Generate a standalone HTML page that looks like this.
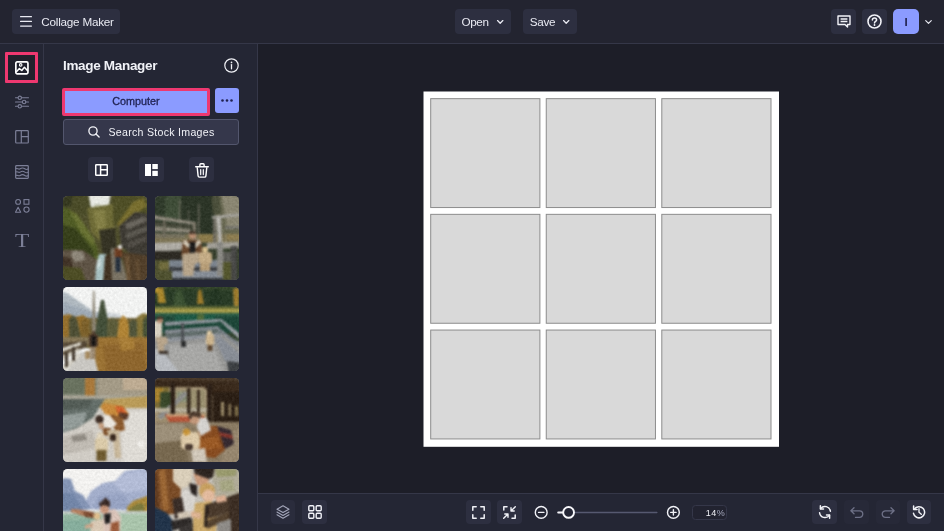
<!DOCTYPE html>
<html lang="en">
<head>
<meta charset="utf-8">
<title>Collage Maker</title>
<style>
*{box-sizing:border-box;margin:0;padding:0}
html,body{width:944px;height:531px;overflow:hidden;background:#1d1e28;font-family:"Liberation Sans",sans-serif;color:#e9eaf2}
.abs{position:absolute}
#app{position:relative;width:944px;height:531px;overflow:hidden;background:#1d1e28;will-change:transform}
#topbar{left:0;top:0;width:944px;height:44px;background:#232430;border-bottom:1px solid #353748}
#rail{left:0;top:44px;width:44px;height:487px;background:#242634;border-right:1px solid #353748}
#panel{left:44px;top:44px;width:214px;height:487px;background:#242634;border-right:1px solid #353748}
#bottombar{left:258px;top:493px;width:686px;height:38px;background:#242634;border-top:1px solid #353748}
.tbtn{position:absolute;top:9px;height:25px;background:#2d2f40;border-radius:4px;font-size:11.7px;line-height:25.6px;color:#e9eaf2;white-space:nowrap}
.bbtn{position:absolute;top:5.6px;width:24.5px;height:24.8px;background:#2d2f40;border-radius:4px}
svg{position:absolute;overflow:visible}
.photo{position:absolute;width:83.8px;height:83.6px;border-radius:4.5px;overflow:hidden}
.cell{position:absolute;width:110.3px;height:110.3px;background:#d9d9d9;border:1px solid #8e8e8e}
.pb{width:25px;height:25px;background:#2d2f40;border-radius:4px}
.bbtn.dis{background:#272938}
.sx{display:inline-block;transform-origin:0 50%}
.sx.c{transform-origin:50% 50%}
</style>
</head>
<body>
<div id="app">

<!-- TOP BAR -->
<div id="topbar" class="abs">
  <div class="tbtn" style="left:12px;width:108px">
    <svg width="12" height="11" viewBox="0 0 12 11" style="left:8px;top:7.2px"><path d="M0.6 0.7H11.4M0.6 5.4H11.4M0.6 10.1H11.4" stroke="#e9eaf2" stroke-width="1.3" fill="none" stroke-linecap="round"/></svg>
    <span class="abs" id="t_cm" style="left:29.3px;top:0;letter-spacing:-0.22px">Collage Maker</span>
  </div>
  <div class="tbtn" style="left:455px;width:56px">
    <span class="abs" id="t_open" style="left:6.5px;top:0;letter-spacing:-0.38px">Open</span>
    <svg width="6.4" height="4" viewBox="0 0 8 5" style="left:41.7px;top:10.9px"><path d="M0.7 0.7L4 4L7.3 0.7" stroke="#e9eaf2" stroke-width="1.6" fill="none" stroke-linecap="round" stroke-linejoin="round"/></svg>
  </div>
  <div class="tbtn" style="left:523px;width:54px">
    <span class="abs" id="t_save" style="left:6.8px;top:0;letter-spacing:-0.33px">Save</span>
    <svg width="6.4" height="4" viewBox="0 0 8 5" style="left:39.8px;top:10.9px"><path d="M0.7 0.7L4 4L7.3 0.7" stroke="#e9eaf2" stroke-width="1.6" fill="none" stroke-linecap="round" stroke-linejoin="round"/></svg>
  </div>
  <div class="tbtn" style="left:831px;width:25px">
    <svg width="14" height="13" viewBox="0 0 14 13" style="left:6px;top:6px"><path d="M1 1H13V9.5H10.5V12L8 9.5H1Z" stroke="#f2f3f8" stroke-width="1.4" fill="none" stroke-linejoin="round"/><path d="M3.6 4H10.4M3.6 6.5H10.4" stroke="#f2f3f8" stroke-width="1.3" fill="none"/></svg>
  </div>
  <div class="tbtn" style="left:862px;width:25px">
    <svg width="15" height="15" viewBox="0 0 15 15" style="left:5px;top:5px"><circle cx="7.5" cy="7.5" r="6.5" stroke="#f2f3f8" stroke-width="1.6" fill="none"/><path d="M5.4 6.1C5.4 4.8 6.3 4 7.5 4C8.7 4 9.6 4.8 9.6 5.9C9.6 7.3 7.5 7.4 7.5 9" stroke="#f2f3f8" stroke-width="1.5" fill="none" stroke-linecap="round"/><circle cx="7.5" cy="11" r="0.9" fill="#f2f3f8"/></svg>
  </div>
  <div class="abs" style="left:893px;top:9px;width:26px;height:25px;background:#8b9bff;border-radius:5px;color:#1d1e4a;font-size:11.5px;font-weight:bold;line-height:26px;text-align:center">I</div>
  <svg width="7" height="4.2" viewBox="0 0 8 5" style="left:924.9px;top:19.5px"><path d="M0.7 0.7L4 4L7.3 0.7" stroke="#e9eaf2" stroke-width="1.4" fill="none" stroke-linecap="round" stroke-linejoin="round"/></svg>
</div>

<!-- LEFT RAIL -->
<div id="rail" class="abs">
  <div class="abs" style="left:5.2px;top:8px;width:33px;height:30.6px;border:3px solid #ee3870;border-radius:1px;background:#20212c"></div>
  <!-- image manager icon -->
  <svg width="14" height="14" viewBox="0 0 14 14" style="left:14.7px;top:16.6px"><rect x="0.85" y="0.85" width="12.1" height="12" rx="1.3" stroke="#fff" stroke-width="1.7" fill="none"/><circle cx="5.7" cy="3.9" r="1.25" stroke="#fff" stroke-width="1.1" fill="none"/><path d="M1.2 10.9L4.4 7.6L6.8 9.5L9.4 6.3L12.8 10" stroke="#fff" stroke-width="1.5" fill="none" stroke-linejoin="round"/></svg>
  <!-- sliders -->
  <svg width="14" height="14" viewBox="0 0 14 14" style="left:15px;top:51px"><path d="M0.5 2.8H13.5M0.5 7H13.5M0.5 11.3H13.5" stroke="#7c7f97" stroke-width="1.1" fill="none" stroke-linecap="round"/><circle cx="4.8" cy="2.8" r="1.7" fill="#242635" stroke="#7c7f97" stroke-width="1.1"/><circle cx="9.1" cy="7" r="1.7" fill="#242635" stroke="#7c7f97" stroke-width="1.1"/><circle cx="4.8" cy="11.3" r="1.7" fill="#242635" stroke="#7c7f97" stroke-width="1.1"/></svg>
  <!-- layout -->
  <svg width="14" height="14" viewBox="0 0 14 14" style="left:15px;top:86px"><rect x="0.7" y="0.7" width="12.6" height="12.3" rx="0.8" stroke="#7c7f97" stroke-width="1.2" fill="none"/><path d="M6.3 0.7V13M6.3 6.6H13.3" stroke="#7c7f97" stroke-width="1.2" fill="none"/></svg>
  <!-- waves -->
  <svg width="14" height="14" viewBox="0 0 14 14" style="left:15px;top:121px"><rect x="0.7" y="0.7" width="12.6" height="12.6" rx="0.8" stroke="#7c7f97" stroke-width="1.2" fill="none"/><path d="M0.7 3.8C2.3 2.6 3.5 5 5.2 3.8S8.2 2.6 9.8 3.8S12.2 4.6 13.3 3.8M0.7 7.1C2.3 5.9 3.5 8.3 5.2 7.1S8.2 5.9 9.8 7.1S12.2 7.9 13.3 7.1M0.7 10.5C2.3 9.3 3.5 11.7 5.2 10.5S8.2 9.3 9.8 10.5S12.2 11.3 13.3 10.5" stroke="#7c7f97" stroke-width="1.1" fill="none"/></svg>
  <!-- shapes -->
  <svg width="15" height="14" viewBox="0 0 15 14" style="left:14.5px;top:155px"><circle cx="3.1" cy="2.9" r="2.4" stroke="#7c7f97" stroke-width="1.1" fill="none"/><rect x="9" y="0.6" width="4.9" height="4.6" stroke="#7c7f97" stroke-width="1.1" fill="none"/><path d="M3.1 8.3L5.7 13.2H0.5Z" stroke="#7c7f97" stroke-width="1.1" fill="none" stroke-linejoin="round"/><circle cx="11.5" cy="10.6" r="2.6" stroke="#7c7f97" stroke-width="1.1" fill="none"/></svg>
  <!-- text -->
  <div class="abs" style="left:11.8px;top:185.2px;width:20px;height:24px;font-family:'Liberation Serif',serif;font-size:19.4px;line-height:24px;text-align:center;color:#7c7f97;transform:scaleX(1.2)">T</div>
</div>

<!-- PANEL -->
<div id="panel" class="abs">
  <div class="abs" style="left:19px;top:13px;font-size:13.5px;font-weight:bold;line-height:18px;letter-spacing:-0.32px;color:#f1f2f7;white-space:nowrap"><span id="t_im" class="sx">Image Manager</span></div>
  <svg width="15" height="15" viewBox="0 0 15 15" style="left:179.5px;top:14.2px"><circle cx="7.5" cy="7.5" r="6.7" stroke="#f1f2f7" stroke-width="1.2" fill="none"/><path d="M7.5 6.6V10.8" stroke="#f1f2f7" stroke-width="1.3" fill="none" stroke-linecap="round"/><circle cx="7.5" cy="4.4" r="0.85" fill="#f1f2f7"/></svg>
  <!-- computer -->
  <div class="abs" style="left:17.8px;top:43.8px;width:148.2px;height:28px;background:#8b9bff;border:3px solid #ee3870;border-radius:2px;color:#1f2150;font-size:10.8px;line-height:21.4px;letter-spacing:0;-webkit-text-stroke:0.3px #1f2150;text-align:center;white-space:nowrap"><span id="t_comp" class="sx c">Computer</span></div>
  <div class="abs" style="left:171px;top:44px;width:24.3px;height:25.2px;background:#8b9bff;border-radius:3px">
    <svg width="12" height="3" viewBox="0 0 12 3" style="left:6.1px;top:11.2px"><circle cx="1.5" cy="1.5" r="1.3" fill="#1f2150"/><circle cx="6" cy="1.5" r="1.3" fill="#1f2150"/><circle cx="10.5" cy="1.5" r="1.3" fill="#1f2150"/></svg>
  </div>
  <!-- search -->
  <div class="abs" style="left:19px;top:75.2px;width:176px;height:25.5px;background:#35374b;border:1px solid #53566d;border-radius:3px">
    <svg width="13" height="13" viewBox="0 0 13 13" style="left:23.9px;top:6.2px"><circle cx="5" cy="5" r="4.1" stroke="#f1f2f7" stroke-width="1.35" fill="none"/><path d="M8 8L11.1 11" stroke="#f1f2f7" stroke-width="1.4" stroke-linecap="round"/></svg>
    <span class="abs" style="left:44.5px;top:0;font-size:10.6px;line-height:25.6px;letter-spacing:0.28px;color:#f1f2f7;white-space:nowrap"><span id="t_search" class="sx">Search Stock Images</span></span>
  </div>
  <!-- 3 buttons -->
  <div class="abs pb" style="left:44px;top:113px">
    <svg width="13" height="12" viewBox="0 0 13 12" style="left:6.5px;top:6.7px"><rect x="0.75" y="0.75" width="11.5" height="10.5" rx="0.6" stroke="#fff" stroke-width="1.5" fill="none"/><path d="M5.6 0.75V11.25M5.6 5.8H12.25" stroke="#fff" stroke-width="1.5" fill="none"/></svg>
  </div>
  <div class="abs pb" style="left:94.5px;top:113px">
    <svg width="13" height="12" viewBox="0 0 13 12" style="left:6.3px;top:6.7px"><rect x="0" y="0" width="6" height="12" fill="#fff"/><rect x="7.3" y="0" width="5.5" height="5.1" fill="#fff"/><rect x="7.3" y="6.8" width="5.5" height="5.2" fill="#fff"/></svg>
  </div>
  <div class="abs pb" style="left:145px;top:113px">
    <svg width="14" height="15" viewBox="0 0 14 15" style="left:6.2px;top:5.5px"><path d="M0.7 3.7H13.3M4.9 3.5V1.7Q4.9 0.8 5.8 0.8H8.2Q9.1 0.8 9.1 1.7V3.5" stroke="#fff" stroke-width="1.4" fill="none" stroke-linecap="round"/><path d="M2.2 4.3L3.1 12.9Q3.2 14.1 4.4 14.1H9.6Q10.8 14.1 10.9 12.9L11.8 4.3" stroke="#fff" stroke-width="1.4" fill="none" stroke-linejoin="round"/><path d="M5.7 6.7V11.6M8.3 6.7V11.6" stroke="#fff" stroke-width="1.2" fill="none" stroke-linecap="round"/></svg>
  </div>
  <!-- photos -->
  <div class="photo" id="p1" style="left:19.4px;top:152px"><svg width="84" height="84" viewBox="0 0 84 84" style="left:0;top:0"><defs><filter id="f1" x="0" y="0" width="84" height="84" filterUnits="userSpaceOnUse" color-interpolation-filters="sRGB"><feGaussianBlur stdDeviation="0.8" result="b"/><feTurbulence type="fractalNoise" baseFrequency="0.4" numOctaves="3" seed="8" result="n"/><feColorMatrix in="n" type="matrix" values="0.5 0.5 0 0 0 0.5 0.5 0 0 0 0.5 0.5 0 0 0 0 0 0 0 1" result="g"/><feComposite in="b" in2="g" operator="arithmetic" k1="0" k2="1" k3="0.15" k4="-0.075"/></filter></defs><rect x="0" y="0" width="84" height="84" fill="#777"/><g filter="url(#f1)">
<rect x="-4" y="-4" width="92" height="92" fill="#51502e"/>
<polygon points="-4,-4 28,-4 30,16 14,22 -4,12" fill="#4b4c29"/>
<polygon points="-4,-4 10,-4 8,10 -4,12" fill="#373a21"/>
<polygon points="25,-4 48,-4 46,9 40,13 34,11 28,12" fill="#e6e8e1"/>
<polygon points="31,8 38,8 37,20 32,18" fill="#c9ccba"/>
<polygon points="24,12 50,8 52,40 38,46 28,36" fill="#6e6b37"/>
<polygon points="30,14 42,14 43,34 34,36" fill="#837f46"/>
<polygon points="-4,10 6,13 20,28 34,50 36,64 20,58 -4,56" fill="#515d26"/>
<polygon points="6,14 14,18 32,44 30,50 18,36" fill="#687133"/>
<polygon points="-4,28 12,32 30,54 32,64 -4,58" fill="#37401b"/>
<polygon points="50,-4 88,-4 88,20 72,14 58,30 50,28" fill="#4f4f27"/>
<polygon points="54,28 70,6 80,2 84,10 70,20 58,38" fill="#796f30"/>
<polygon points="56,30 72,16 88,18 88,66 70,60 58,50" fill="#3e3b34"/>
<polygon points="62,28 82,20 84,25 64,34" fill="#69655d"/>
<polygon points="62,38 84,30 84,35 64,43" fill="#5c5951"/>
<polygon points="64,47 84,40 84,44 66,52" fill="#534f48"/>
<polygon points="36,34 52,32 54,56 40,60" fill="#353324"/>
<polygon points="-4,54 20,54 34,64 36,88 -4,88" fill="#5f5446"/>
<polygon points="10,54 20,56 22,64 12,66 8,60" fill="#8d8679"/>
<polygon points="-4,60 8,62 10,72 -4,72" fill="#413327"/>
<polygon points="-4,70 18,72 24,88 -4,88" fill="#4d4d25"/>
<polygon points="36,58 43,58 42,70 40,88 32,88 33,70" fill="#a6bfc0"/>
<polygon points="34,64 38,62 38,70 34,74" fill="#c9d8d8"/>
<polygon points="48,52 55,52 66,88 46,88" fill="#797263"/>
<polygon points="42,60 48,58 49,88 40,88" fill="#413323"/>
<polygon points="58,56 88,60 88,88 66,88" fill="#513f2a"/>
<polygon points="62,60 66,60 68,88 64,88" fill="#6b5438"/>
<polygon points="72,64 76,64 78,88 74,88" fill="#614c33"/>
<rect x="51.5" y="52" width="7.5" height="10" rx="2" fill="#6d3e23"/>
<rect x="52.5" y="61" width="5" height="15" fill="#26303e"/>
<circle cx="57" cy="51" r="2.2" fill="#e2e0dc"/>
</g></svg></div>
  <div class="photo" id="p2" style="left:111px;top:152px"><svg width="84" height="84" viewBox="0 0 84 84" style="left:0;top:0"><defs><filter id="f2" x="0" y="0" width="84" height="84" filterUnits="userSpaceOnUse" color-interpolation-filters="sRGB"><feGaussianBlur stdDeviation="0.8" result="b"/><feTurbulence type="fractalNoise" baseFrequency="0.4" numOctaves="3" seed="15" result="n"/><feColorMatrix in="n" type="matrix" values="0.5 0.5 0 0 0 0.5 0.5 0 0 0 0.5 0.5 0 0 0 0 0 0 0 1" result="g"/><feComposite in="b" in2="g" operator="arithmetic" k1="0" k2="1" k3="0.15" k4="-0.075"/></filter></defs><rect x="0" y="0" width="84" height="84" fill="#777"/><g filter="url(#f2)">
<rect x="-4" y="-4" width="92" height="92" fill="#343d2b"/>
<rect x="-4" y="-4" width="30" height="44" fill="#303b2b"/>
<rect x="10" y="-4" width="16" height="26" fill="#3f4d38"/>
<rect x="26" y="-4" width="34" height="44" fill="#2c3527"/>
<rect x="24" y="4" width="1.500" height="34" fill="#6a6a5c"/>
<rect x="43" y="8" width="1.500" height="30" fill="#66665a"/>
<rect x="33" y="14" width="1.200" height="24" fill="#5c5c50"/>
<polygon points="58,-4 88,-4 88,40 62,40" fill="#66664f"/>
<polygon points="66,-2 84,0 86,30 72,30" fill="#8a8672"/>
<polygon points="56,2 64,-2 66,18 58,18" fill="#4a4e3a"/>
<rect x="-4" y="38" width="92" height="9" fill="#7d7455"/>
<rect x="44" y="38" width="16" height="8" fill="#8a7a4a"/>
<polygon points="-2,19 40,26 40,29 -2,23" fill="#8d887b"/>
<polygon points="-2,26 38,30 38,32 -2,29" fill="#4a4a3c"/>
<polygon points="-2,30 36,33 36,37 -2,35" fill="#8a8577"/>
<polygon points="-2,37 30,38 30,42 -2,42" fill="#77725f"/>
<rect x="38" y="26" width="3" height="18" fill="#807a6c"/>
<rect x="8" y="24" width="2.500" height="18" fill="#6e6a5c"/>
<polygon points="57,20 88,17 88,20 57,23" fill="#a3a19a"/>
<rect x="58" y="22" width="3" height="26" fill="#6d6a60"/>
<polygon points="61,22 66,22 67,46 63,46" fill="#b3b1ab"/>
<rect x="70" y="30" width="16" height="3" fill="#77766e"/>
<rect x="72" y="38" width="14" height="6" fill="#8c7c50"/>
<polygon points="-4,47 30,46 30,54 -4,56" fill="#adaaa3"/>
<polygon points="52,47 84,46 84,52 52,53" fill="#a19e96"/>
<rect x="-4" y="55" width="36" height="9" fill="#2d2a23"/>
<rect x="-4" y="64" width="24" height="24" fill="#4f5130"/>
<rect x="4" y="66" width="10" height="8" fill="#6f6a3c"/>
<rect x="14" y="64" width="58" height="7" fill="#7b838d"/>
<rect x="14" y="71" width="58" height="4" fill="#3e4044"/>
<rect x="17" y="75" width="58" height="8" fill="#868d96"/>
<rect x="17" y="82" width="60" height="6" fill="#2f3236"/>
<rect x="62" y="46" width="6" height="34" fill="#8a8984"/>
<rect x="76" y="50" width="6" height="38" fill="#484846"/>
<rect x="68" y="56" width="8" height="10" fill="#5f5f5a"/>
<rect x="68" y="66" width="8" height="18" fill="#54562e"/>
<polygon points="28,44 46,44 48,60 26,60" fill="#69482e"/>
<polygon points="30,43 36,50 33,52 28,47" fill="#d3cab8"/>
<polygon points="44,43 38,50 41,52 46,47" fill="#d3cab8"/>
<rect x="34.500" y="46" width="6" height="12" fill="#1d1c1c"/>
<circle cx="37.500" cy="39.500" r="3.600" fill="#b48a6e"/>
<rect x="34" y="35" width="7" height="3" rx="1.500" fill="#4a3a2e"/>
<polygon points="27,58 44,56 45,66 40,68 38,80 28,80" fill="#b5a389"/>
<rect x="44" y="56" width="13" height="12" rx="3" fill="#c2aa84"/>
<circle cx="50" cy="53.500" r="3" fill="#d8c090"/>
<rect x="45" y="67" width="10" height="8" fill="#b59c76"/>
</g></svg></div>
  <div class="photo" id="p3" style="left:19.4px;top:243.1px"><svg width="84" height="84" viewBox="0 0 84 84" style="left:0;top:0"><defs><filter id="f3" x="0" y="0" width="84" height="84" filterUnits="userSpaceOnUse" color-interpolation-filters="sRGB"><feGaussianBlur stdDeviation="0.8" result="b"/><feTurbulence type="fractalNoise" baseFrequency="0.4" numOctaves="3" seed="22" result="n"/><feColorMatrix in="n" type="matrix" values="0.5 0.5 0 0 0 0.5 0.5 0 0 0 0.5 0.5 0 0 0 0 0 0 0 1" result="g"/><feComposite in="b" in2="g" operator="arithmetic" k1="0" k2="1" k3="0.15" k4="-0.075"/></filter></defs><rect x="0" y="0" width="84" height="84" fill="#777"/><g filter="url(#f3)">
<rect x="-4" y="-4" width="92" height="92" fill="#f1f2f1"/>
<polygon points="-4,4 4,6 30,24 62,32 -4,34" fill="#b0b9c0"/>
<polygon points="-4,14 20,22 40,32 -4,34" fill="#9ea9b4"/>
<polygon points="40,25 56,27 66,34 40,34" fill="#cdd2d6"/>
<rect x="-4" y="31" width="92" height="30" fill="#6e6036"/>
<polygon points="-4,29 6,27 12,30 20,28 26,32 26,52 -4,52" fill="#95702e"/>
<polygon points="6,32 10,28 14,32 18,50 6,50" fill="#4f5036"/>
<polygon points="18,34 24,30 28,50 18,50" fill="#7b602b"/>
<polygon points="38,13 41,13 48,50 31,50" fill="#434f39"/>
<polygon points="30,4 31.500,4 33,44 29,44" fill="#8d8676"/>
<polygon points="44,36 50,30 56,36 58,50 44,50" fill="#5c5c3a"/>
<polygon points="56,34 60,28 64,32 69,50 54,50" fill="#b08436"/>
<polygon points="66,36 70,32 76,36 78,50 66,50" fill="#50543a"/>
<polygon points="74,30 80,26 88,28 88,52 74,52" fill="#857438"/>
<polygon points="80,34 84,28 88,34 88,50 80,50" fill="#465036"/>
<rect x="-4" y="50" width="30" height="8" fill="#857656"/>
<polygon points="26,50 88,50 88,88 30,88" fill="#9a7234"/>
<polygon points="40,58 80,56 84,88 44,88" fill="#8e662e"/>
<polygon points="56,50 70,50 72,62 58,64" fill="#a87e38"/>
<polygon points="-4,56 24,54 24,60 -4,70" fill="#544735"/>
<polygon points="14,66 30,64 36,88 2,88" fill="#c9c7c2"/>
<polygon points="-4,62 18,55 18,58 -4,66" fill="#dcd8cc"/>
<polygon points="-4,70 16,61 17,64 -4,75" fill="#d6d2c6"/>
<polygon points="-4,82 16,66 18,68 -2,88" fill="#d9d5ca"/>
<rect x="9" y="60" width="3" height="14" fill="#3d3328"/>
<rect x="2" y="66" width="3" height="14" fill="#3d3328"/>
<rect x="26" y="47" width="9" height="13" rx="2" fill="#4a3628"/>
<rect x="28.500" y="49" width="4" height="10" fill="#191818"/>
<circle cx="30.500" cy="45.500" r="1.800" fill="#5a4638"/>
<rect x="27.500" y="60" width="5" height="12" fill="#9a8870"/>
<rect x="22" y="64" width="5" height="8" rx="1.500" fill="#a58a60"/>
</g></svg></div>
  <div class="photo" id="p4" style="left:111px;top:243.1px"><svg width="84" height="84" viewBox="0 0 84 84" style="left:0;top:0"><defs><filter id="f4" x="0" y="0" width="84" height="84" filterUnits="userSpaceOnUse" color-interpolation-filters="sRGB"><feGaussianBlur stdDeviation="0.8" result="b"/><feTurbulence type="fractalNoise" baseFrequency="0.4" numOctaves="3" seed="29" result="n"/><feColorMatrix in="n" type="matrix" values="0.5 0.5 0 0 0 0.5 0.5 0 0 0 0.5 0.5 0 0 0 0 0 0 0 1" result="g"/><feComposite in="b" in2="g" operator="arithmetic" k1="0" k2="1" k3="0.15" k4="-0.075"/></filter></defs><rect x="0" y="0" width="84" height="84" fill="#777"/><g filter="url(#f4)">
<rect x="-4" y="-4" width="92" height="92" fill="#2a3c27"/>
<rect x="-4" y="-4" width="92" height="7" fill="#34452a"/>
<polygon points="2,2 8,0 11,16 3,16" fill="#a8862c"/>
<polygon points="0,0 4,0 4,6 0,6" fill="#b8922e"/>
<polygon points="43,4 46,2 49,17 42,17" fill="#9a7a2c"/>
<polygon points="78,2 84,0 84,19 79,19" fill="#a07e30"/>
<polygon points="20,6 26,2 32,20 18,20" fill="#3d5234"/>
<polygon points="56,4 62,0 68,20 54,20" fill="#243623"/>
<rect x="-4" y="19" width="92" height="3" fill="#5a6434"/>
<rect x="-4" y="21.5" width="92" height="4.5" fill="#a39a4a"/>
<rect x="-4" y="26" width="92" height="20" fill="#1d4638"/>
<rect x="-4" y="26" width="92" height="3.500" fill="#2c5c46"/>
<rect x="20" y="28" width="40" height="8" fill="#1f5a46"/>
<rect x="42" y="27" width="7" height="8" fill="#4f6a3a"/>
<polygon points="-4,50 64,46 88,56 88,88 -4,88" fill="#969694"/>
<polygon points="14,58 58,56 70,88 16,88" fill="#a7a7a5"/>
<polygon points="10,47 64,42 64,46 10,52" fill="#5f6a68"/>
<polygon points="10,35 64,32 64,35 10,39" fill="#8e939a"/>
<polygon points="10,43 64,39 64,42 10,47" fill="#858a91"/>
<polygon points="12,51 66,46 66,49.500 12,55" fill="#8c9198"/>
<rect x="26" y="36" width="3" height="22" fill="#4d5054"/>
<rect x="26" y="54" width="5" height="6" fill="#2e2f30"/>
<polygon points="63,32 66,32 84,46 84,52" fill="#9a9ea5"/>
<polygon points="63,40 84,56 84,60 63,44" fill="#7f848b"/>
<polygon points="60,52 66,50 88,70 88,76 70,74" fill="#888d95"/>
<polygon points="72,74 88,76 88,88 74,88" fill="#3c3f42"/>
<polygon points="0,62 6,62 26,88 0,88" fill="#b7babf"/>
<rect x="-2" y="34" width="9" height="16" rx="2" fill="#d8d0c0"/>
<circle cx="5" cy="33" r="3.200" fill="#b98e74"/>
<rect x="2" y="29.500" width="6" height="3" rx="1.500" fill="#4a362a"/>
<polygon points="0,50 12,50 13,56 9,58 9,66 3,66 2,56" fill="#b7a48a"/>
<rect x="4" y="64" width="9" height="3" fill="#3a3028"/>
<rect x="51" y="47" width="8" height="11" rx="2.500" fill="#cbb38c"/>
<circle cx="54.500" cy="46" r="2.600" fill="#dcc8a4"/>
<rect x="52.500" y="58" width="5" height="6" fill="#5c4630"/>
</g></svg></div>
  <div class="photo" id="p5" style="left:19.4px;top:334.2px"><svg width="84" height="84" viewBox="0 0 84 84" style="left:0;top:0"><defs><filter id="f5" x="0" y="0" width="84" height="84" filterUnits="userSpaceOnUse" color-interpolation-filters="sRGB"><feGaussianBlur stdDeviation="0.8" result="b"/><feTurbulence type="fractalNoise" baseFrequency="0.4" numOctaves="3" seed="36" result="n"/><feColorMatrix in="n" type="matrix" values="0.5 0.5 0 0 0 0.5 0.5 0 0 0 0.5 0.5 0 0 0 0 0 0 0 1" result="g"/><feComposite in="b" in2="g" operator="arithmetic" k1="0" k2="1" k3="0.15" k4="-0.075"/></filter></defs><rect x="0" y="0" width="84" height="84" fill="#777"/><g filter="url(#f5)">
<rect x="-4" y="-4" width="92" height="92" fill="#d2cec7"/>
<rect x="-4" y="-4" width="92" height="24" fill="#7f8474"/>
<rect x="-4" y="-4" width="26" height="20" fill="#69725f"/>
<rect x="22" y="-2" width="10" height="20" fill="#a8783a"/>
<rect x="34" y="-4" width="54" height="22" fill="#a39a86"/>
<rect x="60" y="-4" width="28" height="16" fill="#bdab92"/>
<rect x="-4" y="17.500" width="92" height="4" fill="#aaa698"/>
<polygon points="-4,21 44,21 36,30 30,40 14,50 -4,56" fill="#646e69"/>
<polygon points="-4,21 30,21 26,30 -4,32" fill="#545d57"/>
<polygon points="-4,38 24,34 20,46 -4,56" fill="#939c99"/>
<polygon points="42,21 88,18 88,30 56,30 36,30" fill="#b99b58"/>
<polygon points="40,30 88,30 88,88 -4,88 -4,58 16,50 30,40" fill="#d0ccc5"/>
<polygon points="58,34 88,32 88,88 60,88" fill="#dedbd5"/>
<polygon points="-4,60 30,52 34,70 -4,78" fill="#bfbab2"/>
<polygon points="8,58 22,56 24,62 10,64" fill="#8f8a82"/>
<circle cx="78" cy="66" r="3.400" fill="#f0eeea"/>
<polygon points="40,25 60,28 66,36 62,42 42,36 38,30" fill="#c78a3c"/>
<polygon points="52,28 60,29 64,36 56,38" fill="#cf5e2c"/>
<polygon points="56,34 66,36 64,42 56,41" fill="#5a3a28"/>
<polygon points="48,36 60,40 62,52 54,54 46,44" fill="#8b5a2e"/>
<polygon points="38,38 46,37 54,46 48,51 40,47" fill="#ebe7df"/>
<circle cx="36.500" cy="41.500" r="4.200" fill="#3a2a22"/>
<polygon points="36,44 41,46 40,52 36,50" fill="#c09878"/>
<polygon points="40,50 48,50 46,58 40,57" fill="#7c4e28"/>
<polygon points="44,52 56,52 58,80 52,80 50,62 46,62" fill="#c8b79a"/>
<rect x="47" y="56" width="6" height="7" rx="2" fill="#3a2a20"/>
<circle cx="37.500" cy="58" r="3.800" fill="#e0d4bc"/>
<rect x="32" y="60" width="13" height="14" rx="3" fill="#d9c9a8"/>
<rect x="33.500" y="72" width="10" height="11" fill="#6e5a30"/>
</g></svg></div>
  <div class="photo" id="p6" style="left:111px;top:334.2px"><svg width="84" height="84" viewBox="0 0 84 84" style="left:0;top:0"><defs><filter id="f6" x="0" y="0" width="84" height="84" filterUnits="userSpaceOnUse" color-interpolation-filters="sRGB"><feGaussianBlur stdDeviation="0.8" result="b"/><feTurbulence type="fractalNoise" baseFrequency="0.4" numOctaves="3" seed="43" result="n"/><feColorMatrix in="n" type="matrix" values="0.5 0.5 0 0 0 0.5 0.5 0 0 0 0.5 0.5 0 0 0 0 0 0 0 1" result="g"/><feComposite in="b" in2="g" operator="arithmetic" k1="0" k2="1" k3="0.15" k4="-0.075"/></filter></defs><rect x="0" y="0" width="84" height="84" fill="#777"/><g filter="url(#f6)">
<rect x="-4" y="-4" width="92" height="92" fill="#8a7a62"/>
<rect x="-4" y="8" width="92" height="38" fill="#a09072"/>
<rect x="-4" y="8" width="18" height="24" fill="#7a6a34"/>
<polygon points="0,10 8,10 8,24 0,24" fill="#a8822e"/>
<rect x="5" y="14" width="11" height="16" fill="#3a482b"/>
<rect x="20" y="12" width="30" height="20" fill="#9a9070"/>
<rect x="22" y="14" width="10" height="10" fill="#8a9078"/>
<polygon points="2,38 30,13 33,16 6,42" fill="#8b8b89"/>
<rect x="-4" y="30" width="60" height="4" fill="#b8b09c"/>
<rect x="-4" y="-4" width="92" height="13" fill="#38291c"/>
<polygon points="-4,-4 88,-4 88,4 -4,2" fill="#4a3a2a"/>
<polygon points="46,6 88,6 88,22 56,16" fill="#3a2a1c"/>
<rect x="58" y="14" width="30" height="34" fill="#2b1f15"/>
<rect x="66" y="24" width="3" height="14" fill="#9a8a68"/>
<rect x="73.500" y="26" width="2.500" height="12" fill="#8a7a5a"/>
<rect x="80" y="28" width="3" height="10" fill="#84744f"/>
<rect x="15.500" y="4" width="4.500" height="42" fill="#2c2017"/>
<rect x="32" y="10" width="3.500" height="26" fill="#33261b"/>
<rect x="42" y="12" width="3" height="22" fill="#3a2c20"/>
<rect x="52" y="6" width="5.500" height="40" fill="#2c2017"/>
<polygon points="10,36 50,36 48,44 14,44" fill="#b4563a"/>
<rect x="12" y="36" width="38" height="2.500" fill="#c9a07a"/>
<rect x="-4" y="44" width="92" height="44" fill="#8a7b63"/>
<polygon points="-4,46 30,46 26,62 -4,66" fill="#9c8f79"/>
<polygon points="-4,66 30,62 34,88 -4,88" fill="#77684f"/>
<polygon points="70,56 88,50 88,88 66,88" fill="#96866e"/>
<polygon points="62,48 76,52 79,66 68,72 60,60" fill="#35292f"/>
<polygon points="64,54 77,57 78,61 65,58" fill="#8a3a30"/>
<polygon points="44,48 62,48 70,72 60,80 40,78 42,62" fill="#874c21"/>
<polygon points="44,62 62,58 66,70 44,72" fill="#9a5a26"/>
<polygon points="42,40 52,40 56,52 46,58 42,50" fill="#d5d3d0"/>
<circle cx="39.500" cy="41.500" r="5" fill="#c1977a"/>
<polygon points="33,38 38,33 46,35 46,40 38,38 35,42" fill="#4a382c"/>
<rect x="26" y="54" width="19" height="18" rx="5" fill="#dcc9a8"/>
<circle cx="31.500" cy="54" r="3.600" fill="#c8953a"/>
<polygon points="36,72 50,70 52,84 38,84" fill="#cfc6b8"/>
<rect x="30" y="66" width="8" height="6" rx="2" fill="#4a3a30"/>
</g></svg></div>
  <div class="photo" id="p7" style="left:19.4px;top:425.4px"><svg width="84" height="84" viewBox="0 0 84 84" style="left:0;top:0"><defs><filter id="f7" x="0" y="0" width="84" height="84" filterUnits="userSpaceOnUse" color-interpolation-filters="sRGB"><feGaussianBlur stdDeviation="0.8" result="b"/><feTurbulence type="fractalNoise" baseFrequency="0.4" numOctaves="3" seed="50" result="n"/><feColorMatrix in="n" type="matrix" values="0.5 0.5 0 0 0 0.5 0.5 0 0 0 0.5 0.5 0 0 0 0 0 0 0 1" result="g"/><feComposite in="b" in2="g" operator="arithmetic" k1="0" k2="1" k3="0.15" k4="-0.075"/></filter></defs><rect x="0" y="0" width="84" height="84" fill="#777"/><g filter="url(#f7)">
<rect x="-4" y="-4" width="92" height="92" fill="#f2f1ef"/>
<polygon points="18,40 28,22 40,14 52,12 62,2 88,-2 88,42" fill="#a3aecb"/>
<polygon points="50,14 64,4 88,0 88,20 60,24" fill="#b3bcd6"/>
<polygon points="36,26 60,24 70,40 30,40" fill="#97a3c2"/>
<polygon points="-4,12 2,9 8,10 12,22 20,26 28,40 -4,44" fill="#8494b4"/>
<polygon points="-4,24 10,24 20,40 -4,44" fill="#7386a8"/>
<polygon points="64,38 70,32 84,27 88,28 88,44 64,44" fill="#a8893c"/>
<polygon points="66,40 76,34 82,36 80,44 66,44" fill="#7d7a3e"/>
<rect x="-4" y="43" width="92" height="45" fill="#93b5a0"/>
<rect x="-4" y="42" width="92" height="3" fill="#c5cdc6"/>
<polygon points="50,46 88,44 88,88 56,88" fill="#a9c4ab"/>
<polygon points="-4,52 30,50 30,88 -4,88" fill="#86ad9c"/>
<polygon points="8,40 14,40 30,43 32,49 20,47 8,43" fill="#b27e5e"/>
<polygon points="20,42 32,44 36,50 22,48" fill="#7a4a30"/>
<polygon points="40,42 52,40 58,48 56,88 38,88" fill="#d9c3b8"/>
<polygon points="48,54 56,52 56,88 46,88" fill="#9a5a3a"/>
<polygon points="41,45 48,44 47,54 42,55" fill="#1f1e1e"/>
<circle cx="41.500" cy="40" r="4.600" fill="#c6957a"/>
<polygon points="36,34 42,30 47,32 47,38 40,36 37,38" fill="#3a2a26"/>
<circle cx="42.500" cy="30.500" r="1.800" fill="#3a2a26"/>
<circle cx="34" cy="47" r="3.600" fill="#dcbc8c"/>
<polygon points="28,52 40,50 42,88 26,88" fill="#d9c9b5"/>
<polygon points="22,56 30,54 30,58 22,60" fill="#c9a58a"/>
</g></svg></div>
  <div class="photo" id="p8" style="left:111px;top:425.4px"><svg width="84" height="84" viewBox="0 0 84 84" style="left:0;top:0"><defs><filter id="f8" x="0" y="0" width="84" height="84" filterUnits="userSpaceOnUse" color-interpolation-filters="sRGB"><feGaussianBlur stdDeviation="0.9" result="b"/><feTurbulence type="fractalNoise" baseFrequency="0.4" numOctaves="3" seed="57" result="n"/><feColorMatrix in="n" type="matrix" values="0.5 0.5 0 0 0 0.5 0.5 0 0 0 0.5 0.5 0 0 0 0 0 0 0 1" result="g"/><feComposite in="b" in2="g" operator="arithmetic" k1="0" k2="1" k3="0.15" k4="-0.075"/></filter></defs><rect x="0" y="0" width="84" height="84" fill="#777"/><g filter="url(#f8)">
<rect x="-4" y="-4" width="92" height="92" fill="#c2beb6"/>
<polygon points="56,-4 88,-4 88,34 60,30" fill="#b0ab98"/>
<polygon points="60,0 82,0 80,7 62,8" fill="#98996c"/>
<polygon points="64,12 78,10 80,22 66,22" fill="#a5a582"/>
<polygon points="20,20 42,22 40,48 22,50" fill="#d6d3ce"/>
<polygon points="-4,-4 22,-4 26,20 24,44 10,46 -4,40" fill="#7a4c27"/>
<polygon points="4,2 10,0 14,40 8,42" fill="#9c6836"/>
<polygon points="-4,4 2,4 4,38 -4,38" fill="#5e3a20"/>
<polygon points="-4,36 12,44 18,52 16,88 -4,88" fill="#22344a"/>
<polygon points="18,-4 38,-4 36,16 26,20 18,12" fill="#d9ceb9"/>
<polygon points="38,-4 60,-4 58,8 50,12 40,6" fill="#2e2520"/>
<polygon points="38,4 48,8 54,10 52,18 42,16" fill="#c8997b"/>
<polygon points="34,14 42,16 42,28 36,24" fill="#2a2422"/>
<polygon points="17,30 27,28 30,46 20,50" fill="#3a2e28"/>
<polygon points="22,44 34,42 36,50 24,52" fill="#d2c6b4"/>
<polygon points="16,52 36,48 38,54 18,62" fill="#2e2a28"/>
<polygon points="24,58 40,54 40,88 26,88" fill="#3a3634"/>
<circle cx="52" cy="22" r="8" fill="#c7a060"/>
<circle cx="53.500" cy="27" r="6.400" fill="#e2ba9e"/>
<polygon points="40,34 56,32 62,44 60,88 38,88 38,50" fill="#c9a86a"/>
<polygon points="36,42 46,44 46,50 36,48" fill="#d9b090"/>
<polygon points="50,36 84,24 88,26 88,38 54,50" fill="#4a3a2c"/>
<polygon points="52,52 84,38 84,46 52,60" fill="#54422f"/>
<polygon points="74,28 86,24 88,88 74,88" fill="#3c2e24"/>
<polygon points="50,36 54,36 52,58 49,58" fill="#2a211c"/>
<polygon points="60,28 70,26 72,32 62,34" fill="#dcae92"/>
<polygon points="62,54 76,50 76,88 62,88" fill="#8d8a86"/>
</g></svg></div>
</div>

<!-- CANVAS -->
<div id="canvas" class="abs" style="left:420px;top:88px;width:364px;height:364px"><svg width="364" height="364" viewBox="0 0 364 364" style="left:0;top:0"><rect x="3.5" y="3.5" width="355.5" height="355.3" fill="#fff"/><g fill="#d9d9d9" stroke="#8c8c8c" stroke-width="1"><rect x="10.70" y="10.65" width="109.2" height="108.9"/><rect x="126.25" y="10.65" width="109.2" height="108.9"/><rect x="241.80" y="10.65" width="109.2" height="108.9"/><rect x="10.70" y="126.35" width="109.2" height="108.9"/><rect x="126.25" y="126.35" width="109.2" height="108.9"/><rect x="241.80" y="126.35" width="109.2" height="108.9"/><rect x="10.70" y="242.05" width="109.2" height="108.9"/><rect x="126.25" y="242.05" width="109.2" height="108.9"/><rect x="241.80" y="242.05" width="109.2" height="108.9"/></g></svg></div>

<!-- BOTTOM BAR -->
<div id="bottombar" class="abs">
  <div class="bbtn" style="left:12.5px;background:#2a2c3c">
    <svg width="14" height="14" viewBox="0 0 14 14" style="left:5.5px;top:5.5px"><path d="M7 0.8L13 4.2L7 7.6L1 4.2Z" stroke="#a3a6ba" stroke-width="1.1" fill="none" stroke-linejoin="round"/><path d="M1 7L7 10.4L13 7M1 9.8L7 13.2L13 9.8" stroke="#a3a6ba" stroke-width="1.1" fill="none" stroke-linejoin="round" stroke-linecap="round"/></svg>
  </div>
  <div class="bbtn" style="left:44px">
    <svg width="14" height="14" viewBox="0 0 14 14" style="left:5.5px;top:5.5px"><rect x="0.8" y="0.8" width="5" height="5" rx="1" stroke="#f1f2f7" stroke-width="1.4" fill="none"/><rect x="8.2" y="0.8" width="5" height="5" rx="1" stroke="#f1f2f7" stroke-width="1.4" fill="none"/><rect x="0.8" y="8.2" width="5" height="5" rx="1" stroke="#f1f2f7" stroke-width="1.4" fill="none"/><rect x="8.2" y="8.2" width="5" height="5" rx="1" stroke="#f1f2f7" stroke-width="1.4" fill="none"/></svg>
  </div>
  <div class="bbtn" style="left:208px">
    <svg width="13" height="13" viewBox="0 0 13 13" style="left:6px;top:6px"><path d="M0.8 4.2V0.8H4.2M8.8 0.8H12.2V4.2M12.2 8.8V12.2H8.8M4.2 12.2H0.8V8.8" stroke="#f1f2f7" stroke-width="1.5" fill="none" stroke-linejoin="round" stroke-linecap="round"/></svg>
  </div>
  <div class="bbtn" style="left:239px">
    <svg width="13" height="13" viewBox="0 0 13 13" style="left:6px;top:6px"><path d="M0.8 4V0.8H4M12.2 9V12.2H9" stroke="#f1f2f7" stroke-width="1.5" fill="none" stroke-linejoin="round" stroke-linecap="round"/><path d="M12.3 0.7L8 5M8 1.8V5H11.2M0.7 12.3L5 8M5 11.2V8H1.8" stroke="#f1f2f7" stroke-width="1.4" fill="none" stroke-linejoin="round" stroke-linecap="round"/></svg>
  </div>
  <svg width="160" height="21" viewBox="0 0 160 21" style="left:271px;top:8px"><circle cx="12.2" cy="10.4" r="5.9" stroke="#f1f2f7" stroke-width="1.4" fill="none"/><path d="M9.5 10.4H14.9" stroke="#f1f2f7" stroke-width="1.4" stroke-linecap="round"/><path d="M30 10.4H127.8" stroke="#565970" stroke-width="1.5" stroke-linecap="round"/><path d="M29.2 10.4H35" stroke="#f4f4f8" stroke-width="2" stroke-linecap="round"/><circle cx="39.6" cy="10.4" r="5.4" stroke="#f8f8fb" stroke-width="1.9" fill="#242635"/><circle cx="144.4" cy="10.4" r="5.9" stroke="#f1f2f7" stroke-width="1.4" fill="none"/><path d="M141.7 10.4H147.1M144.4 7.7V13.1" stroke="#f1f2f7" stroke-width="1.4" stroke-linecap="round"/></svg>
  <div class="abs" style="left:434.4px;top:10.7px;width:35px;height:15px;border:1px solid #353749;border-radius:3.5px;background:#222330;font-size:9px;letter-spacing:0.45px;line-height:15px;color:#f1f2f7;text-align:right;padding-right:1.2px;white-space:nowrap">14<span style="color:#a6a9be">%</span></div>
  <div class="bbtn" style="left:554px">
    <svg width="14" height="14" viewBox="0 0 14 14" style="left:5.5px;top:5.5px"><path d="M12.4 6.2A5.5 5.5 0 0 0 2.6 3.6M1.6 7.8A5.5 5.5 0 0 0 11.4 10.4" stroke="#f1f2f7" stroke-width="1.5" fill="none" stroke-linecap="round"/><path d="M2.4 0.8V3.9H5.5M11.6 13.2V10.1H8.5" stroke="#f1f2f7" stroke-width="1.5" fill="none" stroke-linecap="round" stroke-linejoin="round"/></svg>
  </div>
  <div class="bbtn dis" style="left:586px">
    <svg width="14" height="11" viewBox="0 0 14 11" style="left:5.5px;top:7px"><path d="M4 0.8L0.9 3.8L4 6.8M1 3.8H9.5A3.3 3.3 0 0 1 9.5 10.4H5.5" stroke="#6e7187" stroke-width="1.3" fill="none" stroke-linecap="round" stroke-linejoin="round"/></svg>
  </div>
  <div class="bbtn dis" style="left:617.5px">
    <svg width="14" height="11" viewBox="0 0 14 11" style="left:5.5px;top:7px"><path d="M10 0.8L13.1 3.8L10 6.8M13 3.8H4.5A3.3 3.3 0 0 0 4.5 10.4H8.5" stroke="#6e7187" stroke-width="1.3" fill="none" stroke-linecap="round" stroke-linejoin="round"/></svg>
  </div>
  <div class="bbtn" style="left:648.5px">
    <svg width="14" height="14" viewBox="0 0 14 14" style="left:5.5px;top:5.5px"><path d="M2.3 4.2A5.6 5.6 0 1 1 1.5 8.3" stroke="#f1f2f7" stroke-width="1.5" fill="none" stroke-linecap="round"/><path d="M1.6 0.9V4.4H5.1" stroke="#f1f2f7" stroke-width="1.5" fill="none" stroke-linecap="round" stroke-linejoin="round"/><path d="M7 3.8V7.2L9.3 9.2" stroke="#f1f2f7" stroke-width="1.4" fill="none" stroke-linecap="round" stroke-linejoin="round"/></svg>
  </div>
</div>

</div>
</body>
</html>
